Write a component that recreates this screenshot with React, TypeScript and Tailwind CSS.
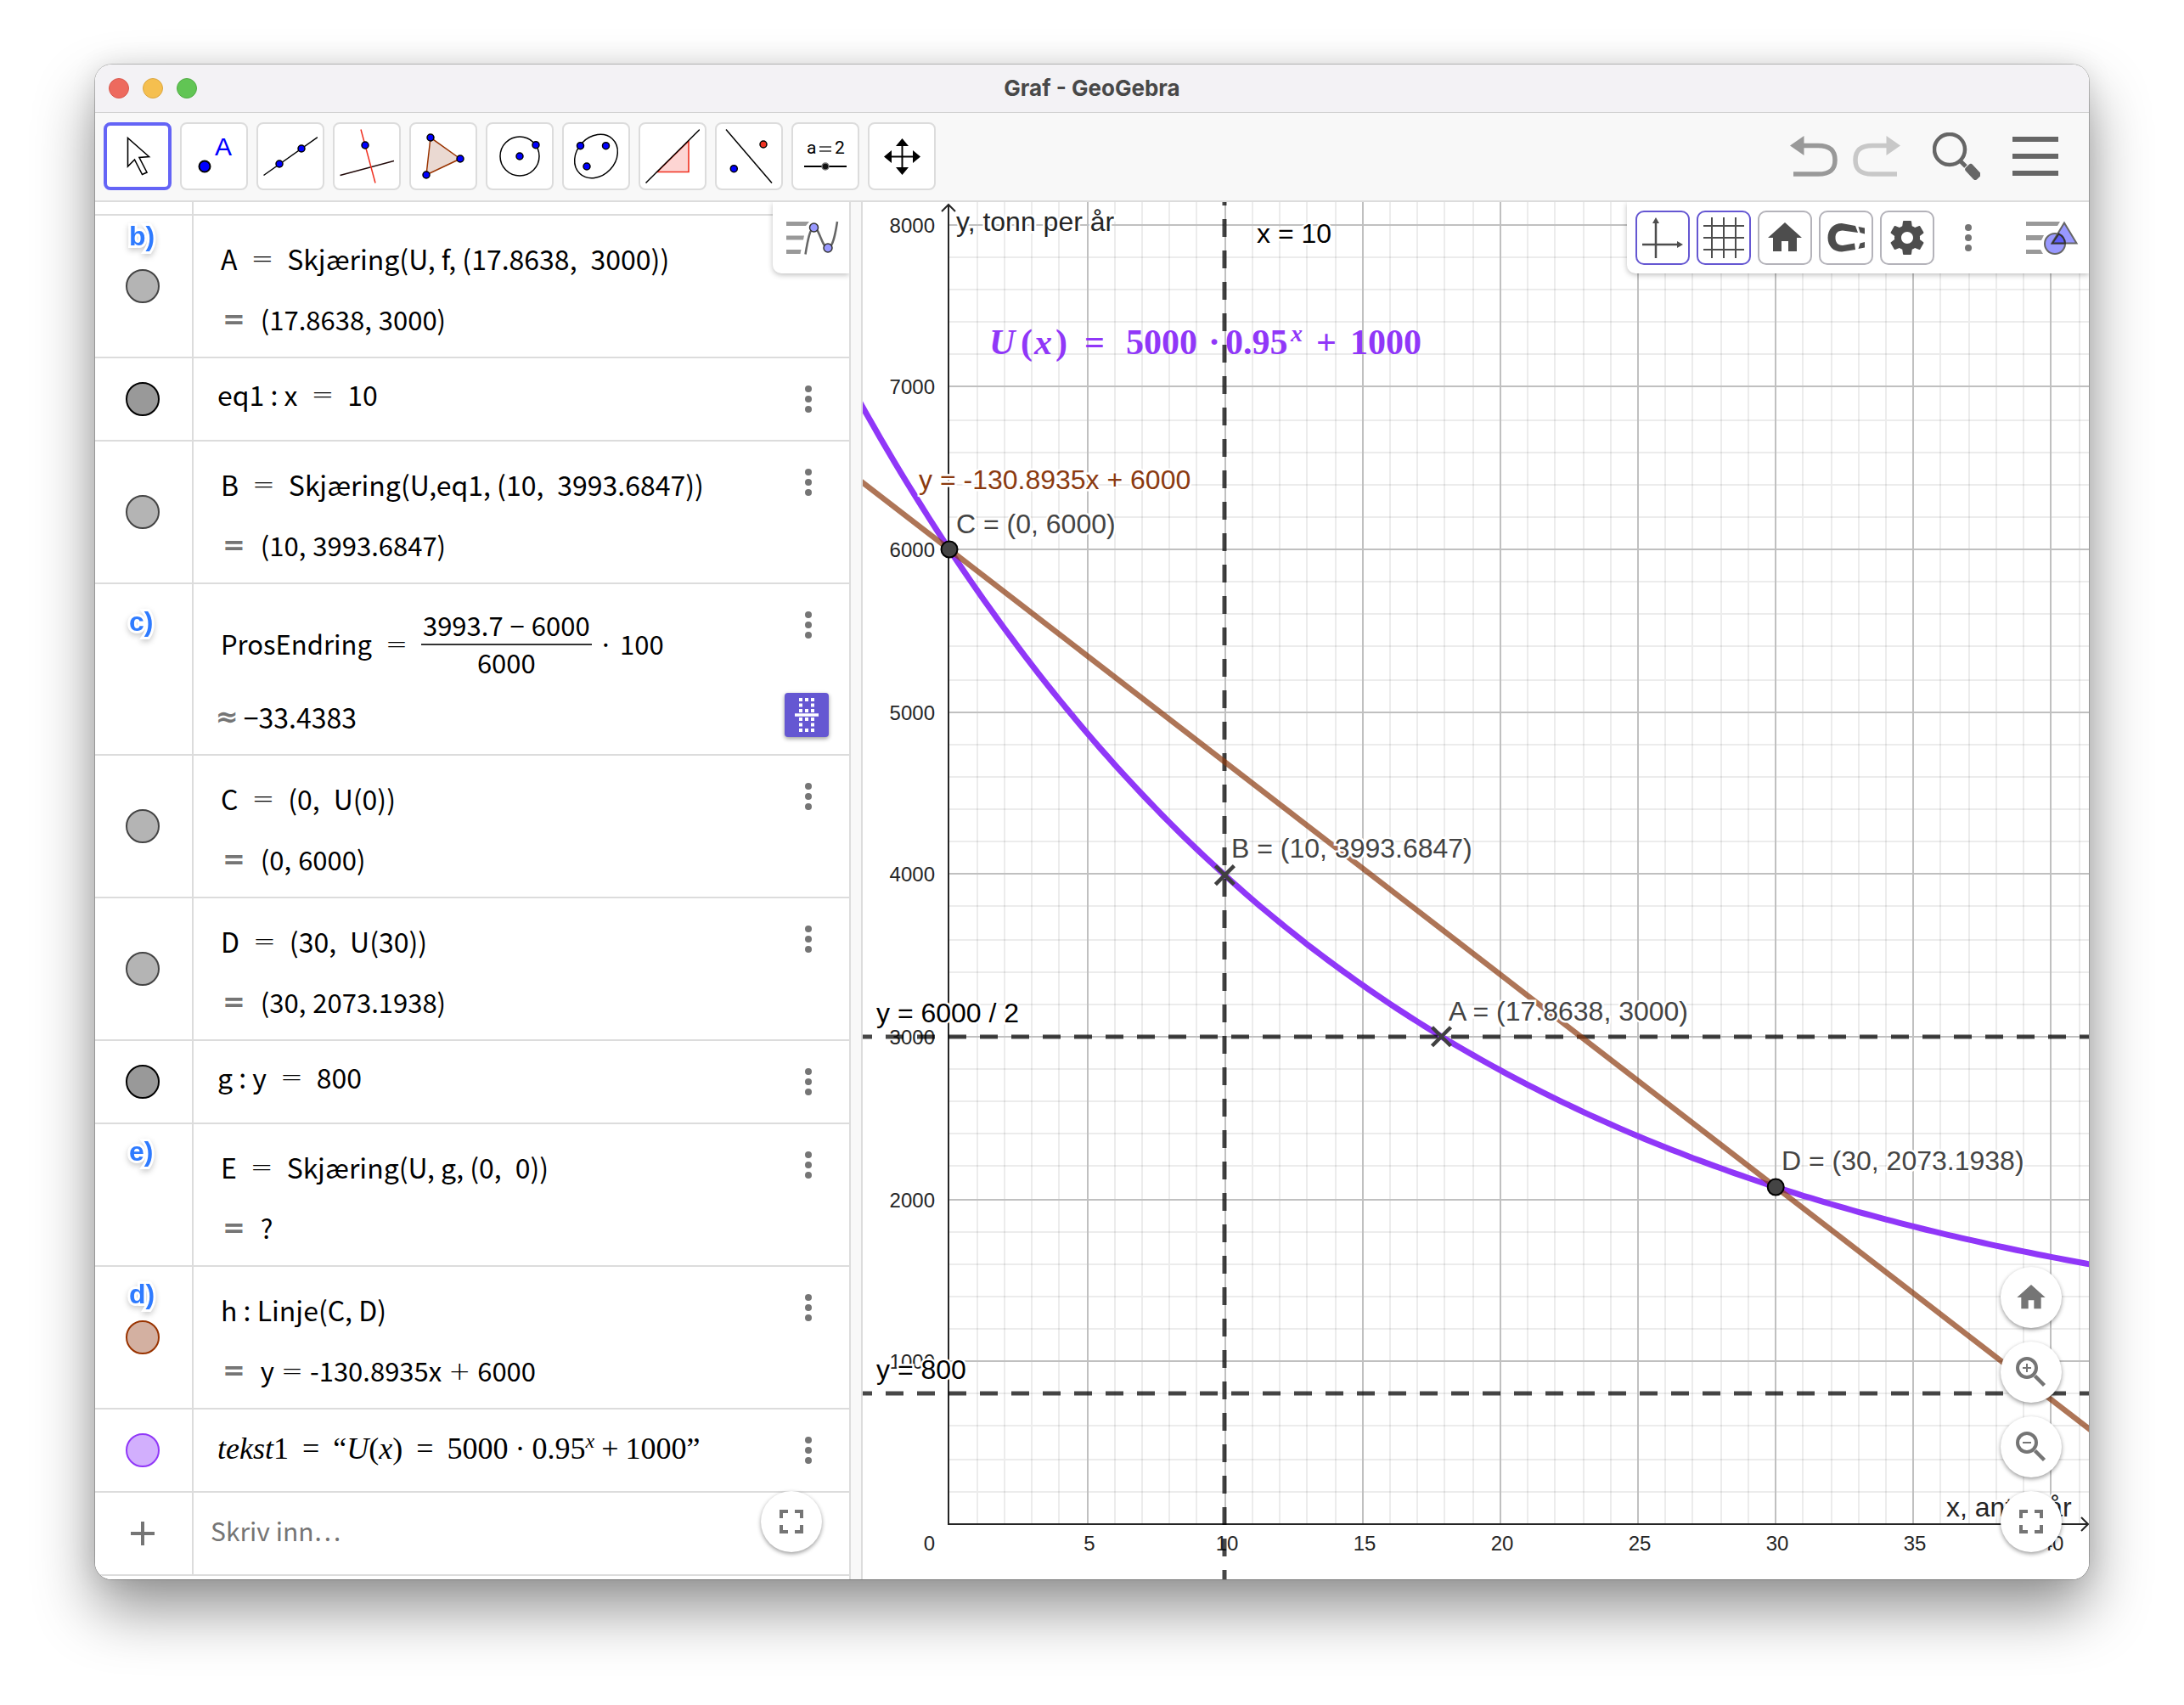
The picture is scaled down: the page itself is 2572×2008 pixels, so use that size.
import { type ReactNode } from 'react';

const MATH = "font-['Noto_Sans_CJK_JP','Noto_Sans',sans-serif]";

/* ---------- small pieces ---------- */

function Dot({ x, y, r = 4, fill = '#0000ff' }: { x: number; y: number; r?: number; fill?: string }) {
  return <circle cx={x} cy={y} r={r} fill={fill} stroke="#000" strokeWidth="1.5" />;
}

function Kebab() {
  return (
    <svg className="w-2 h-8" viewBox="0 0 8 32" fill="#757575">
      <circle cx="4" cy="4" r="4" />
      <circle cx="4" cy="16" r="4" />
      <circle cx="4" cy="28" r="4" />
    </svg>
  );
}

function HomeIcon() {
  return <path d="M10 20v-6h4v6h5v-8h3L12 3 2 12h3v8z" />;
}

function FullscreenIcon() {
  return (
    <svg className="w-12 h-12" viewBox="0 0 24 24" fill="#757575">
      <path d="M7 14H5v5h5v-2H7v-3zm-2-4h2V7h3V5H5v5zm12 7h-3v2h5v-5h-2v3zM14 5v2h3v3h2V5h-5z" />
    </svg>
  );
}

function Fab({ label, children }: { label: string; children: ReactNode }) {
  return (
    <button
      aria-label={label}
      className="w-18 h-18 rounded-full bg-white flex items-center justify-center shadow-[0_2px_5px_rgba(0,0,0,0.4)]"
    >
      {children}
    </button>
  );
}

/* ---------- toolbar ---------- */

const tools: { name: string; icon: ReactNode }[] = [
  {
    name: 'Flytt',
    icon: (
      <path
        d="M20.5 10.5V44L28.5 36L37.5 53.5L43 51L34 33.5L45.5 32.5Z"
        fill="#fff"
        stroke="#000"
        strokeWidth="1.6"
      />
    ),
  },
  {
    name: 'Punkt',
    icon: (
      <>
        <circle cx="21" cy="44" r="6.5" fill="#0000ff" stroke="#000" strokeWidth="2" />
        <text x="33" y="31" fontSize="30" fill="#0000ff" className="font-['Liberation_Sans',sans-serif]">
          A
        </text>
      </>
    ),
  },
  {
    name: 'Linje',
    icon: (
      <>
        <path d="M0.5 54.5L64 9.5" stroke="#000" strokeWidth="1.5" />
        <Dot x={19} y={41} />
        <Dot x={45} y={23} />
      </>
    ),
  },
  {
    name: 'Normal',
    icon: (
      <>
        <path d="M0.5 54.5L64 37.5" stroke="#200808" strokeWidth="1.5" />
        <path d="M25 0.5L42 63.5" stroke="#f03020" strokeWidth="1.5" />
        <Dot x={30} y={19} />
      </>
    ),
  },
  {
    name: 'Mangekant',
    icon: (
      <>
        <path d="M17 10L52 35L12 54Z" fill="#ead9d2" stroke="#993300" strokeWidth="1.5" />
        <Dot x={17} y={10} />
        <Dot x={52} y={35} />
        <Dot x={12} y={54} />
      </>
    ),
  },
  {
    name: 'Sirkel',
    icon: (
      <>
        <circle cx="32" cy="32" r="23" fill="none" stroke="#000" strokeWidth="1.5" />
        <Dot x={32} y={32} />
        <Dot x={51} y={18.7} />
      </>
    ),
  },
  {
    name: 'Ellipse',
    icon: (
      <>
        <ellipse
          cx="32"
          cy="32"
          rx="28"
          ry="22.8"
          transform="rotate(-47 32 32)"
          fill="none"
          stroke="#000"
          strokeWidth="1.5"
        />
        <Dot x={13.5} y={19.7} />
        <Dot x={43.5} y={19.7} />
        <Dot x={21} y={44} />
      </>
    ),
  },
  {
    name: 'Stigning',
    icon: (
      <>
        <path d="M51 14V50.5H14Z" fill="#fdd5d3" stroke="#f03020" strokeWidth="1.6" />
        <path d="M0.5 63.5L64 0.5" stroke="#000" strokeWidth="1.5" />
      </>
    ),
  },
  {
    name: 'Speiling',
    icon: (
      <>
        <path d="M5 0.5L59 63.5" stroke="#000" strokeWidth="1.5" />
        <Dot x={49} y={18} fill="#ee3322" />
        <Dot x={14.3} y={46.7} />
      </>
    ),
  },
  {
    name: 'Glider',
    icon: (
      <>
        <g fontSize="21" fill="#000" className="font-['Roboto',sans-serif]">
          <text x="10" y="29">a</text>
          <text x="43" y="29">2</text>
        </g>
        <path d="M25 21H39M25 26H39" stroke="#333" strokeWidth="1.5" />
        <path d="M7 44H57" stroke="#000" strokeWidth="2" />
        <circle cx="32" cy="44" r="4" fill="#111" stroke="#777" strokeWidth="1.5" />
      </>
    ),
  },
  {
    name: 'Flytt grafikkfeltet',
    icon: (
      <>
        <path d="M32.5 14V51M14 32.5H51" stroke="#000" strokeWidth="2" />
        <path d="M32.5 11L40 20H25ZM32.5 54L40 45H25ZM11 32.5L20 25V40ZM54 32.5L45 25V40Z" fill="#000" />
      </>
    ),
  },
];

function UndoArrow({ color, flip = false }: { color: string; flip?: boolean }) {
  return (
    <svg className={flip ? 'w-14 h-12 -scale-x-100' : 'w-14 h-12'} viewBox="0 0 56 48">
      <path d="M0 11.5L16.5 0V23Z" fill={color} />
      <path
        d="M16 11.5H33C48 11.5 53 18 53 28.5C53 39 48 45 33 45H4"
        fill="none"
        stroke={color}
        strokeWidth="5.5"
      />
    </svg>
  );
}

function Toolbar() {
  return (
    <div className="flex items-start justify-between bg-[#f8f8f8] border-b-2 border-[#dcdcdc] px-2.5 pt-[11px] pb-3">
      <div className="flex gap-2.5">
        {tools.map((tool, i) => (
          <button
            key={tool.name}
            aria-label={tool.name}
            className={
              i === 0
                ? 'w-20 h-20 rounded-lg bg-white flex items-center justify-center border-4 border-[#6464f6]'
                : 'w-20 h-20 rounded-lg bg-white flex items-center justify-center border-2 border-[#dcdcdc]'
            }
          >
            <svg className="w-16 h-16 shrink-0" viewBox="0 0 64 64">
              {tool.icon}
            </svg>
          </button>
        ))}
      </div>

      <div className="flex items-center h-20 pr-6.5">
        <button aria-label="Angre">
          <UndoArrow color="#999999" />
        </button>
        <button aria-label="Gjør om" className="ml-4.5">
          <UndoArrow color="#c8c8c8" flip />
        </button>
        <button aria-label="Søk" className="ml-9.5">
          <svg className="w-14 h-14" viewBox="0 0 56 56" fill="none" stroke="#666">
            <circle cx="20" cy="20" r="18" strokeWidth="4.5" />
            <path d="M32 33L39 40" strokeWidth="5" />
            <rect
              x="38"
              y="41"
              width="19"
              height="11"
              rx="3"
              transform="rotate(47 47.5 46.5)"
              fill="#666"
              stroke="none"
            />
          </svg>
        </button>
        <button aria-label="Meny" className="ml-9.5 flex flex-col gap-3.5">
          <span className="w-[54px] h-1.5 bg-[#666]" />
          <span className="w-[54px] h-1.5 bg-[#666]" />
          <span className="w-[54px] h-1.5 bg-[#666]" />
        </button>
      </div>
    </div>
  );
}

/* ---------- algebra view ---------- */

// Parts are separated by "|", which is where wide mathematical space goes.
function Formula({ text, tight = false }: { text: string; tight?: boolean }) {
  return (
    <span className={tight ? 'flex gap-2' : 'flex gap-4'}>
      {text.split('|').map((part, i) =>
        part === '=' || part === '+' ? (
          <span key={i} className="font-extralight font-['DejaVu_Sans',sans-serif]">
            {part}
          </span>
        ) : (
          <span key={i} className="whitespace-pre">
            {part}
          </span>
        )
      )}
    </span>
  );
}

function Result({ text }: { text: string }) {
  return (
    <div className="flex gap-4.5 pl-0.5 text-[31px]">
      <span className="font-bold text-[32px] text-[#757575] font-['DejaVu_Sans',sans-serif]">=</span>
      <Formula text={text} tight />
    </div>
  );
}

type Row = {
  id: string;
  mark?: string;
  task?: { text: string; place: string };
  input: ReactNode;
  result?: ReactNode;
  fraction?: boolean;
  menu?: boolean;
};

const GREY = 'bg-[#b4b4b4] border-[#444]';
const DARK = 'bg-[#999] border-black';

const rows: Row[] = [
  {
    id: 'A',
    mark: GREY,
    task: { text: 'b)', place: 'top-1' },
    input: <Formula text="A|=|Skjæring(U, f, (17.8638,|3000))" />,
    result: <Result text="(17.8638,|3000)" />,
    menu: false,
  },
  { id: 'eq1', mark: DARK, input: <Formula text="eq1 : x|=|10" /> },
  {
    id: 'B',
    mark: GREY,
    input: <Formula text="B|=|Skjæring(U,eq1, (10,|3993.6847))" />,
    result: <Result text="(10,|3993.6847)" />,
  },
  {
    id: 'ProsEndring',
    task: { text: 'c)', place: 'top-6' },
    fraction: true,
    input: (
      <div className="flex items-center text-[31px]">
        <Formula text="ProsEndring|=|" />
        <span className="flex flex-col items-center">
          <span className="flex gap-2 border-b-2 border-[#333] h-12 pt-1 px-0.5">
            3993.7 <span>−</span> 6000
          </span>
          <span className="h-11">6000</span>
        </span>
        <span className="flex gap-2 pl-2">
          <span>·</span> 100
        </span>
      </div>
    ),
    result: (
      <div className="flex gap-1.5 -ml-1.5">
        <span className="font-bold text-[#757575] font-['DejaVu_Sans',sans-serif]">≈</span>
        <span>−33.4383</span>
      </div>
    ),
  },
  {
    id: 'C',
    mark: GREY,
    input: <Formula text="C|=|(0,|U(0))" />,
    result: <Result text="(0,|6000)" />,
  },
  {
    id: 'D',
    mark: GREY,
    input: <Formula text="D|=|(30,|U(30))" />,
    result: <Result text="(30,|2073.1938)" />,
  },
  { id: 'g', mark: DARK, input: <Formula text="g : y|=|800" /> },
  {
    id: 'E',
    task: { text: 'e)', place: 'top-3' },
    input: <Formula text="E|=|Skjæring(U, g, (0,|0))" />,
    result: <Result text="?" />,
  },
  {
    id: 'h',
    mark: 'bg-[#d3b0a1] border-[#993300]',
    task: { text: 'd)', place: 'top-3' },
    input: <Formula text="h : Linje(C, D)" />,
    result: <Result text="y|=|-130.8935x|+|6000" />,
  },
  {
    id: 'tekst1',
    mark: 'bg-[#d2affd] border-[#9037f8]',
    input: (
      <span className="flex gap-4 pt-1 text-[36px] font-['Liberation_Serif',serif]">
        <span>
          <i>tekst</i>1
        </span>
        <span>=</span>
        <span>
          “<i>U</i>(<i>x</i>)
        </span>
        <span>=</span>
        <span className="flex gap-2">
          <span>5000</span>
          <span>·</span>
          <span>
            0.95<i className="inline-block align-super text-2xl leading-4">x</i>
          </span>
          <span>+</span>
          <span>1000”</span>
        </span>
      </span>
    ),
  },
];

function AlgebraRow({ row }: { row: Row }) {
  return (
    <li className="flex border-b-2 border-[#dcdcdc]">
      <div className="relative w-29 pr-0.5 shrink-0 border-r-2 border-[#dcdcdc] flex items-center justify-center">
        {row.mark && <button aria-label={`Vis ${row.id}`} className={`w-10 h-10 rounded-full border-2 ${row.mark}`} />}
        {row.task && (
          <span
            className={`absolute left-10 ${row.task.place} text-[32px] leading-10 font-bold text-[#2f7bff] font-['Liberation_Sans',sans-serif] [paint-order:stroke] [-webkit-text-stroke:6px_white] [filter:drop-shadow(0_3px_3px_rgba(0,0,0,0.2))]`}
          >
            {row.task.text}
          </span>
        )}
      </div>
      {row.result ? (
        <div
          className={
            row.fraction
              ? 'flex-1 min-w-0 pl-8 py-6 flex flex-col gap-5 whitespace-nowrap'
              : 'flex-1 min-w-0 pl-8 pt-[30px] pb-6 flex flex-col gap-8 whitespace-nowrap'
          }
        >
          {row.input}
          {row.result}
        </div>
      ) : (
        <div className="flex-1 min-w-0 pl-7 pt-[22px] h-24 whitespace-nowrap">{row.input}</div>
      )}
      <div className="w-24 shrink-0 flex flex-col items-center">
        {row.menu !== false && (
          <button aria-label="Mer" className="w-12 h-24 flex items-center justify-center">
            <Kebab />
          </button>
        )}
        {row.fraction && (
          <button
            aria-label="Vis som brøk"
            className="mt-8 mr-1 w-13 h-13 rounded bg-[#6557d2] flex items-center justify-center shadow-[0_2px_5px_rgba(0,0,0,0.4)]"
          >
            <svg className="w-8 h-11" viewBox="0 0 32 44" fill="none" stroke="#fff">
              <path d="M2 22H30" strokeWidth="3.5" />
              <path
                d="M7 4H25M7 10.5H11M21 10.5H25M7 17H25M7 27H25M7 33.5H11M21 33.5H25M7 40H25"
                strokeWidth="4"
                strokeDasharray="4 3"
              />
            </svg>
          </button>
        )}
      </div>
    </li>
  );
}

function AlgebraView() {
  return (
    <section className="relative w-[890px] shrink-0 bg-white pb-1 border-r-2 border-[#dcdcdc]">
      <ul className={`text-[32px] leading-10 text-black ${MATH}`}>
        <li className="flex h-4 border-b-2 border-[#dcdcdc]">
          <div className="w-29 border-r-2 border-[#dcdcdc]" />
        </li>
        {rows.map((row) => (
          <AlgebraRow key={row.id} row={row} />
        ))}
        <li className="flex border-b-2 border-[#dcdcdc]">
          <label
            htmlFor="expression"
            aria-label="Skriv inn"
            className="w-29 pr-0.5 border-r-2 border-[#dcdcdc] flex items-center justify-center"
          >
            <svg className="w-7 h-7" viewBox="0 0 28 28" stroke="#757575" strokeWidth="4">
              <path d="M14 0V28M0 14H28" />
            </svg>
          </label>
          <input
            id="expression"
            placeholder="Skriv inn…"
            className="flex-1 min-w-0 h-24 pl-5 pb-2 text-[30px] placeholder:text-[#757575] outline-none"
          />
        </li>
      </ul>

      <button
        aria-label="Stilinje"
        className="absolute top-0 right-0 pl-4 pr-3 h-21 rounded-bl-[10px] bg-white shadow-[0_2px_6px_rgba(0,0,0,0.25)] [clip-path:inset(0_0_-10px_-10px)]"
      >
        <svg className="w-[62px] h-10" viewBox="0 0 62 40">
          <path d="M0 1H27L23 6H0ZM0 17.5H21L20 22.5H0ZM0 34H17.5L16.5 39H0Z" fill="#999" />
          <path
            d="M22.5 39.5C25 24 28 8 32.5 8C39 8 42 32 49 32C55 32 58 14 60 1"
            fill="none"
            stroke="#666"
            strokeWidth="2.5"
          />
          <circle cx="32.5" cy="8" r="5" fill="#9999ff" stroke="#333" strokeWidth="1.5" />
          <circle cx="49" cy="32" r="5" fill="#9999ff" stroke="#333" strokeWidth="1.5" />
        </svg>
      </button>

      <div className="absolute right-8 bottom-8">
        <Fab label="Fullskjerm">
          <FullscreenIcon />
        </Fab>
      </div>
    </section>
  );
}

/* ---------- graphics view ---------- */

const W = 1444;
const H = 1622;
const sx = (x: number) => 102 + x * 32.44;
const sy = (y: number) => 1556.5 - y * 0.19125;
const U = (x: number) => 5000 * 0.95 ** x + 1000;
const h = (x: number) => 6000 - 130.8935 * x;

const snap = (v: number) => 2 * Math.floor(v / 2) + 1;

const range = (n: number) => Array.from({ length: n }, (_, i) => i);
const minor = range(42).filter((i) => i % 5 !== 0);
const major = [1, 2, 3, 4, 5, 6, 7, 8];

const curve = range(187)
  .map((i) => {
    const x = -4 + i * 0.25;
    return `${i === 0 ? 'M' : 'L'}${sx(x).toFixed(1)} ${sy(U(x)).toFixed(1)}`;
  })
  .join('');

function Cross({ x, y }: { x: number; y: number }) {
  return (
    <path d={`M${sx(x) - 11} ${sy(y) - 11}l22 22m0 -22l-22 22`} stroke="#404040" strokeWidth="4.5" fill="none" />
  );
}

function Plot() {
  const bottom = 1557;
  return (
    <svg
      className="absolute inset-0 w-full h-full font-['Liberation_Sans',sans-serif]"
      viewBox={`0 0 ${W} ${H}`}
      preserveAspectRatio="xMinYMin slice"
    >
      <g stroke="#000" strokeOpacity="0.075" strokeWidth="2">
        {minor.map((i) => (
          <path key={i} d={`M${snap(sx(i))} 0V${bottom}M101 ${snap(sy(i * 200))}H${W}`} />
        ))}
      </g>
      <g stroke="#c0c0c0" strokeWidth="2">
        {major.map((i) => (
          <path key={i} d={`M${snap(sx(5 * i))} 0V${bottom}M101 ${snap(sy(1000 * i))}H${W}`} />
        ))}
      </g>

      {/* axes */}
      <g fill="none" stroke="#252525" strokeWidth="2">
        <path d={`M101 3V${bottom}H${W - 1}`} />
        <path d="M93 11L101 3L109 11" />
        <path d={`M${W - 9} ${bottom - 8}L${W - 1} ${bottom}L${W - 9} ${bottom + 8}`} />
      </g>
      <g fontSize="24" fill="#252525" stroke="#fff" strokeWidth="4" className="[paint-order:stroke]">
        {major.map((i) => (
          <text key={i} x="85" y={snap(sy(1000 * i)) + 9} textAnchor="end">
            {1000 * i}
          </text>
        ))}
        <text x="85" y="1588" textAnchor="end">
          0
        </text>
        {major.map((i) => (
          <text key={i} x={snap(sx(5 * i)) + 2} y="1588" textAnchor="middle">
            {5 * i}
          </text>
        ))}
      </g>
      <g fontSize="32" fill="#252525" stroke="#fff" strokeWidth="5" className="[paint-order:stroke]">
        <text x="110" y="34">y, tonn per år</text>
        <text x="1276" y="1548">x, antall år</text>
      </g>

      {/* text object */}
      <g fontSize="42" fontWeight="bold" fill="#9037f8" className="font-['Liberation_Serif',serif]">
        <text y="179">
          <tspan x="149" fontStyle="italic">U</tspan>
          <tspan x="186">(</tspan>
          <tspan x="202" fontStyle="italic">x</tspan>
          <tspan x="227">)</tspan>
        </text>
        <text x="261" y="179">=</text>
        <text x="310" y="179">5000</text>
        <text x="407" y="179">·</text>
        <text x="427" y="179">0.95</text>
        <text x="504" y="164" fontSize="28" fontStyle="italic">x</text>
        <text x="534" y="179">+</text>
        <text x="574" y="179">1000</text>
      </g>

      {/* lines and curve */}
      <path d={curve} fill="none" stroke="#9037f8" strokeWidth="7" />
      <g stroke="#000" strokeOpacity="0.72" strokeWidth="5" strokeDasharray="21 16">
        <path d={`M426 0V${H}`} strokeDashoffset="17" />
        <path d={`M0 ${snap(sy(3000))}H${W}`} strokeDashoffset="10" />
        <path d={`M0 ${snap(sy(800))}H${W}`} strokeDashoffset="10" />
      </g>
      <path
        d={`M${sx(-4)} ${sy(h(-4))}L${sx(42)} ${sy(h(42))}`}
        stroke="#8b3a0f"
        strokeOpacity="0.7"
        strokeWidth="6.5"
      />

      <circle cx={sx(0)} cy={sy(6000)} r="9.5" fill="#444" stroke="#000" strokeWidth="2" />
      <circle cx={sx(30)} cy={sy(U(30))} r="9.5" fill="#444" stroke="#000" strokeWidth="2" />
      <Cross x={10} y={U(10)} />
      <Cross x={17.8638} y={3000} />

      {/* object labels */}
      <g fontSize="32" stroke="#fff" strokeWidth="5" className="[paint-order:stroke]">
        <g fill="#000">
          <text x="464" y="48">x = 10</text>
          <text x="16" y="966">y = 6000 / 2</text>
          <text x="16" y="1386">y = 800</text>
        </g>
        <text x="66" y="338" fill="#8b3a10">y = -130.8935x + 6000</text>
        <g fill="#444">
          <text x="110" y="390">C = (0, 6000)</text>
          <text x="434" y="772">B = (10, 3993.6847)</text>
          <text x="690" y="964">A = (17.8638, 3000)</text>
          <text x="1082" y="1140">D = (30, 2073.1938)</text>
        </g>
      </g>
    </svg>
  );
}

const styleButtons: { name: string; on: boolean; icon: ReactNode }[] = [
  {
    name: 'Akser',
    on: true,
    icon: (
      <>
        <path d="M24 12V56M8 40H52" stroke="#4d4d4d" strokeWidth="2.5" />
        <path d="M24 8L28 15H20ZM56 40L49 36V44Z" fill="#4d4d4d" />
      </>
    ),
  },
  {
    name: 'Rutenett',
    on: true,
    icon: <path d="M18 8V56M32 8V56M46 8V56M8 18H56M8 32H56M8 46H56" stroke="#4d4d4d" strokeWidth="2" />,
  },
  {
    name: 'Standardvisning',
    on: false,
    icon: (
      <g transform="translate(8 8) scale(2)" fill="#4d4d4d">
        <HomeIcon />
      </g>
    ),
  },
  {
    name: 'Fest til rutenett',
    on: false,
    icon: (
      <path
        d="M43 18L27 15C17 15 10.5 22 10.5 32C10.5 42 17 48.5 27 48.5L43 46L42 38.5L28 41C22 41 19.5 37 19.5 32C19.5 27 22 23.500 28 23.500L46 26ZM46.500 19L54 20.500V27.500L48.500 26ZM46.500 45L54 43.500V37L48.500 38.500Z"
        fill="#4d4d4d"
      />
    ),
  },
  {
    name: 'Innstillinger',
    on: false,
    icon: (
      <path
        transform="translate(8 8) scale(2)"
        fill="#4d4d4d"
        d="M19.43 12.98c.04-.32.07-.64.07-.98s-.03-.66-.07-.98l2.11-1.65c.19-.15.24-.42.12-.64l-2-3.46c-.12-.22-.39-.3-.61-.22l-2.49 1c-.52-.4-1.08-.73-1.69-.98l-.38-2.65C14.46 2.18 14.25 2 14 2h-4c-.25 0-.46.18-.49.42l-.38 2.65c-.61.25-1.17.59-1.69.98l-2.49-1c-.23-.09-.49 0-.61.22l-2 3.46c-.13.22-.07.49.12.64l2.11 1.65c-.04.32-.07.65-.07.98s.03.66.07.98l-2.11 1.65c-.19.15-.24.42-.12.64l2 3.46c.12.22.39.3.61.22l2.49-1c.52.4 1.08.73 1.69.98l.38 2.65c.03.24.24.42.49.42h4c.25 0 .46-.18.49-.42l.38-2.65c.61-.25 1.17-.59 1.69-.98l2.49 1c.23.09.49 0 .61-.22l2-3.46c.12-.22.07-.49-.12-.64l-2.11-1.65zM12 15.5c-1.93 0-3.500-1.570-3.500-3.500s1.570-3.500 3.500-3.500 3.500 1.570 3.500 3.500-1.570 3.500-3.500 3.500z"
      />
    ),
  },
];

function GraphicsView() {
  return (
    <section className="relative flex-1 min-w-0 overflow-hidden bg-white">
      <Plot />

      <div className="absolute top-0 right-0 flex items-center h-21 pl-2.5 pr-3 gap-2 rounded-bl-[10px] bg-white shadow-[0_2px_6px_rgba(0,0,0,0.25)]">
        {styleButtons.map((b) => (
          <button
            key={b.name}
            aria-label={b.name}
            className={`w-16 h-16 rounded-[10px] border-2 flex items-center justify-center ${
              b.on ? 'border-[#6557d2]' : 'border-[#b4b3ba]'
            }`}
          >
            <svg className="w-16 h-16 shrink-0" viewBox="0 0 64 64">
              {b.icon}
            </svg>
          </button>
        ))}
        <button aria-label="Mer" className="w-16 h-16 flex items-center justify-center">
          <Kebab />
        </button>
        <button aria-label="Stilinje" className="ml-7">
          <svg className="w-[62px] h-10" viewBox="0 0 62 40">
            <path d="M0 1H40L37 6H0ZM0 17H21L18 23H0ZM0 34H17L20 39H0Z" fill="#999" />
            <circle cx="34" cy="27" r="12" fill="#9999ff" stroke="#666" strokeWidth="2" />
            <path d="M45 2.5L59.5 26.5H30.5Z" fill="#9999ff" stroke="#666" strokeWidth="2" />
            <path d="M38.5 15.5Q45.5 19 46 26.5H31Z" fill="#5f5ff5" stroke="#333" strokeWidth="2" />
          </svg>
        </button>
      </div>

      <div className="absolute right-8 bottom-8 flex flex-col gap-4">
        <Fab label="Standardvisning">
          <svg className="w-10 h-10" viewBox="0 0 24 24" fill="#757575">
            <HomeIcon />
          </svg>
        </Fab>
        <Fab label="Zoom inn">
          <svg className="w-9 h-9" viewBox="0 0 36 36" fill="none" stroke="#757575">
            <circle cx="13" cy="13" r="11" strokeWidth="4" />
            <path d="M22.5 22.5L33.5 33.5" strokeWidth="4.5" />
            <path d="M8 13H18M13 8V18" strokeWidth="2" />
          </svg>
        </Fab>
        <Fab label="Zoom ut">
          <svg className="w-9 h-9" viewBox="0 0 36 36" fill="none" stroke="#757575">
            <circle cx="13" cy="13" r="11" strokeWidth="4" />
            <path d="M22.5 22.5L33.5 33.5" strokeWidth="4.5" />
            <path d="M8 13H18" strokeWidth="2" />
          </svg>
        </Fab>
        <Fab label="Fullskjerm">
          <FullscreenIcon />
        </Fab>
      </div>
    </section>
  );
}

export default function App() {
  return (
    <div className="min-h-screen bg-white px-28 pt-19 pb-37 overflow-hidden">
      <div className="flex flex-col rounded-[20px] shadow-[0_0_0_1px_rgba(0,0,0,0.22),0_36px_70px_rgba(0,0,0,0.42),0_0_30px_rgba(0,0,0,0.1)]">
        <div className="flex flex-col rounded-[20px] overflow-hidden bg-white">
          <header className="relative flex items-center justify-center h-[57px] bg-[#f3f2f5] border-b border-[#d2d2d2]">
            <div className="absolute left-4 flex gap-4">
              <button aria-label="Lukk" className="w-6 h-6 rounded-full bg-[#ed6a5e] border border-[#d9594e]" />
              <button aria-label="Minimer" className="w-6 h-6 rounded-full bg-[#f5bf4f] border border-[#dba640]" />
              <button aria-label="Maksimer" className="w-6 h-6 rounded-full bg-[#61c554] border border-[#51ab45]" />
            </div>
            <h1 className="text-[26px] leading-8 font-bold text-[#484848] font-['Inter',sans-serif]">
              Graf - GeoGebra
            </h1>
          </header>
          <Toolbar />
          <main className="flex">
            <AlgebraView />
            <div className="w-3.5 shrink-0 bg-[#f8f8f8] border-r-2 border-[#dcdcdc]" />
            <GraphicsView />
          </main>
        </div>
      </div>
    </div>
  );
}
